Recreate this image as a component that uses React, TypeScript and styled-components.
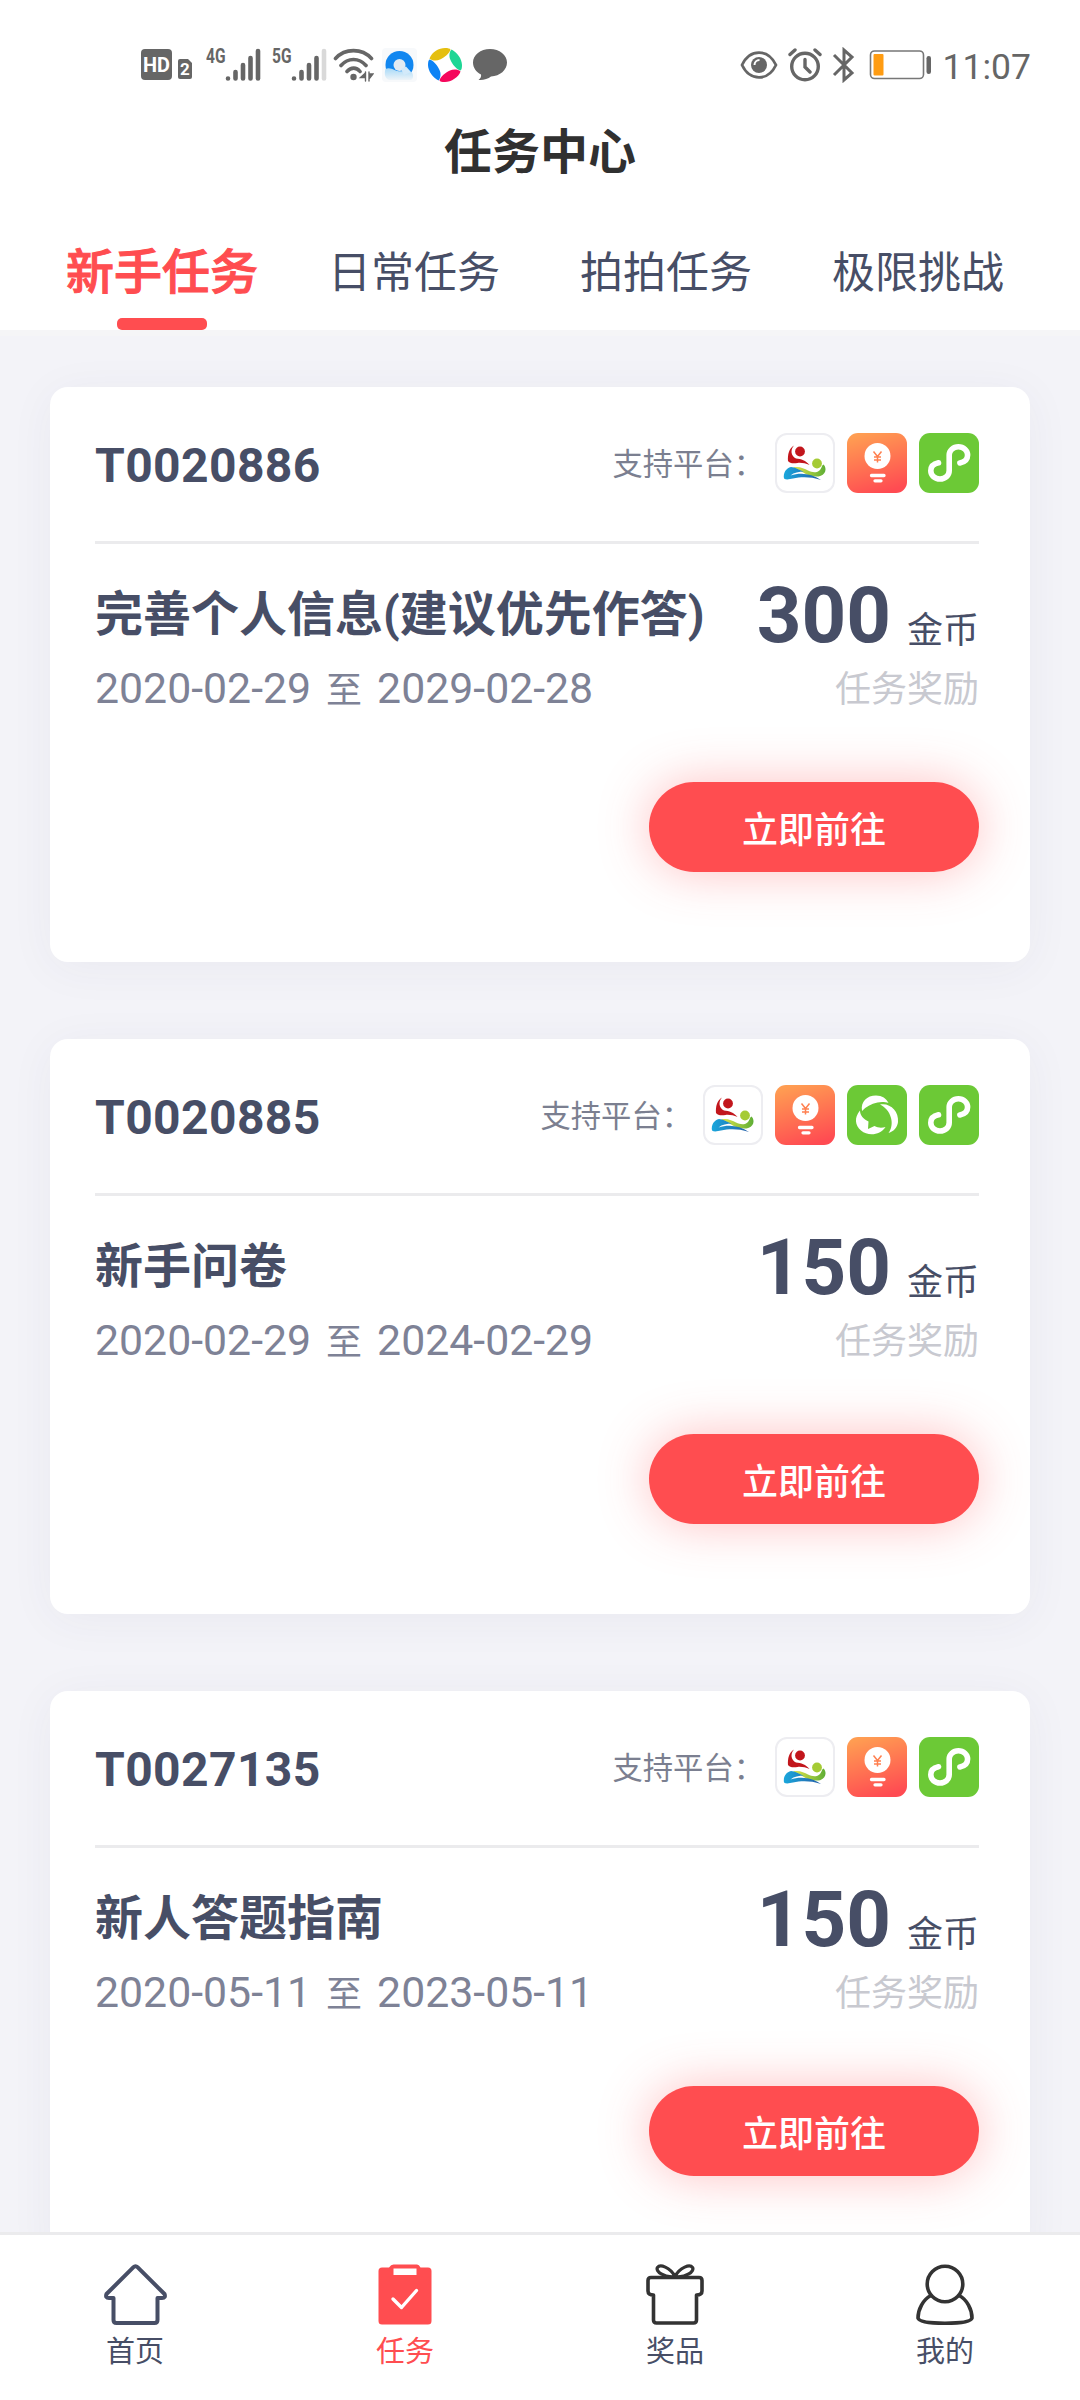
import React from 'react';
import styled, { createGlobalStyle } from 'styled-components';

const INK = '#474e66';
const RED = '#ff4d50';
const STATUS = '#666666';

const GlobalStyle = createGlobalStyle`
  *, *::before, *::after { box-sizing: border-box; }
  html, body { margin: 0; padding: 0; background: #f3f3f8; }
  body { font-family: Roboto, "Noto Sans CJK SC", sans-serif; color: ${INK}; }
  svg { display: block; flex: none; }
`;

const Screen = styled.div`
  display: flex;
  flex-direction: column;
  width: 1080px;
  height: 2400px;
  overflow: hidden;
  background: #f3f3f8;
`;

const Header = styled.header`
  flex: none;
  height: 336px;
  background: #fff;
  border-bottom: 6px solid #f5f5f7;
`;

const StatusBar = styled.div`
  display: flex;
  align-items: center;
  justify-content: space-between;
  height: 130px;
  padding: 0 49px 0 140px;
`;

const StatusGroup = styled.div`
  display: flex;
  align-items: center;
  height: 36px;
`;

const StatusItem = styled.div<{ $gap?: number }>`
  margin-left: ${(p) => p.$gap ?? 0}px;
`;

const NetLabel = styled.span<{ $gap: number }>`
  align-self: flex-start;
  width: 19px;
  margin-left: ${(p) => p.$gap}px;
  font-size: 21px;
  line-height: 18px;
  font-weight: 700;
  white-space: nowrap;
  transform: scaleX(0.74);
  transform-origin: left;
  color: ${STATUS};
`;

const Clock = styled.time`
  margin-left: 11px;
  padding-top: 3px;
  font-size: 35.5px;
  line-height: 40px;
  color: ${STATUS};
`;

const PageTitle = styled.h1`
  margin: 0;
  height: 44px;
  font-size: 48px;
  line-height: 46px;
  font-weight: 700;
  text-align: center;
  color: #303030;
`;

const Tabs = styled.nav`
  display: flex;
  height: 156px;
  padding: 0 36px;
`;

const Tab = styled.a<{ $active?: boolean }>`
  display: flex;
  flex: 1;
  flex-direction: column;
  align-items: center;
  justify-content: flex-end;
  font-size: ${(p) => (p.$active ? 48 : 43)}px;
  font-weight: ${(p) => (p.$active ? 500 : 400)};
  -webkit-text-stroke: ${(p) => (p.$active ? 1 : 0)}px ${RED};
  color: ${(p) => (p.$active ? RED : INK)};
  line-height: 60px;
  white-space: nowrap;

  &::after {
    content: '';
    width: 90px;
    height: 12px;
    margin-top: 15px;
    border-radius: 5px;
    background: ${(p) => (p.$active ? RED : 'transparent')};
  }
`;

const TaskList = styled.main`
  display: flex;
  flex: 1;
  flex-direction: column;
  gap: 77px;
  min-height: 0;
  padding: 51px 50px 0;
  overflow: hidden;
`;

const Card = styled.article`
  flex: none;
  height: 575px;
  padding: 0 51px 0 45px;
  border-radius: 18px;
  background: #fff;
  box-shadow: 0 6px 46px rgba(60, 60, 90, 0.05);
`;

const CardHead = styled.div`
  display: flex;
  align-items: center;
  justify-content: space-between;
  height: 157px;
  padding-bottom: 2px;
  border-bottom: 3px solid #ebebed;
`;

const TaskCode = styled.span`
  padding-top: 6px;
  font-size: 48px;
  font-weight: 700;
  line-height: 56px;
  letter-spacing: 0.4px;
`;

const Platforms = styled.div`
  display: flex;
  align-items: center;
  gap: 12px;
`;

const PlatformLabel = styled.span`
  padding-top: 3px;
  margin-right: -1px;
  font-size: 30.3px;
  line-height: 40px;
  color: #7b7f90;
`;

const CardBody = styled.div`
  display: flex;
  justify-content: space-between;
  height: 166px;
`;

const Info = styled.div`
  padding-top: 41px;
`;

const TaskTitle = styled.h2`
  margin: 0;
  font-size: 48px;
  font-weight: 700;
  line-height: 60px;
  white-space: nowrap;
`;

const Period = styled.div`
  display: flex;
  align-items: center;
  height: 60px;
  margin-top: 13px;
  font-size: 42.8px;
  color: #7e8296;
  white-space: nowrap;
`;

const Until = styled.span`
  margin: 0 15px;
  padding-bottom: 2px;
  font-size: 36px;
`;

const Reward = styled.div`
  padding-top: 32px;
  text-align: right;
`;

const Amount = styled.div`
  display: flex;
  align-items: flex-start;
  justify-content: flex-end;
  gap: 16px;
  height: 89px;
`;

const AmountValue = styled.span`
  font-size: 78px;
  font-weight: 700;
  line-height: 80px;
`;

const Unit = styled.span`
  padding-top: 35px;
  font-size: 36px;
  line-height: 40px;
`;

const RewardLabel = styled.div`
  height: 50px;
  font-size: 36px;
  line-height: 50px;
  color: #c8c9d0;
`;

const Actions = styled.div`
  display: flex;
  justify-content: flex-end;
  padding-top: 72px;
`;

const GoButton = styled.button`
  width: 330px;
  height: 90px;
  padding: 0;
  border: 0;
  border-radius: 45px;
  background: ${RED};
  box-shadow: 0 0 50px rgba(255, 77, 80, 0.35);
  color: #fff;
  font-family: inherit;
  font-size: 36px;
  font-weight: 500;
`;

const BottomNav = styled.nav`
  display: flex;
  flex: none;
  height: 168px;
  padding-top: 29px;
  border-top: 3px solid #ebebed;
  background: #fff;
`;

const NavItem = styled.a<{ $active?: boolean }>`
  display: flex;
  flex: 1;
  flex-direction: column;
  align-items: center;
  gap: 6px;
  font-size: 29px;
  line-height: 40px;
  color: ${(p) => (p.$active ? RED : INK)};
`;

/* ---------- status icons ---------- */

const HdIcon = () => (
  <svg width="52" height="32" viewBox="0 0 52 32">
    <rect x="1" y="0" width="31" height="31" rx="4" fill={STATUS} />
    <text x="16.5" y="23" textAnchor="middle" fontFamily="Roboto" fontWeight="700" fontSize="21" fill="#fff" textLength="27" lengthAdjust="spacingAndGlyphs">HD</text>
    <path d="M40 10h8l4 4v14a2 2 0 0 1-2 2H40a2 2 0 0 1-2-2V12a2 2 0 0 1 2-2z" fill={STATUS} />
    <text x="45" y="26" textAnchor="middle" fontFamily="Roboto" fontWeight="700" fontSize="17" fill="#fff">2</text>
  </svg>
);

const SignalIcon = ({ weak }: { weak?: boolean }) => (
  <svg width="36" height="34" viewBox="0 0 36 34" fill="none" strokeWidth="4.6" strokeLinecap="round">
    <path d="M3 30.5v0M10.5 24v6.5M18 17v13.5M25.5 10v20.5" stroke={STATUS} />
    <path d="M33 3v27.5" stroke={weak ? '#d9d9d9' : STATUS} />
  </svg>
);

const WifiIcon = () => (
  <svg width="41" height="34" viewBox="0 0 41 34" fill="none" stroke={STATUS} strokeWidth="3.6" strokeLinecap="round">
    <path d="M2.5 10.5C12 0 29 0 38.500 10.500M8 17.500c7-8 18-8 25 0M14 23.500c4-4.500 9.500-4.500 13 0" />
    <circle cx="20.500" cy="29" r="3.200" fill={STATUS} stroke="none" />
    <path d="M32.500 24v9M32.500 25l-5 4.500h5M36 24v9M36 31l4-5h-4" fill={STATUS} strokeWidth="1.400" />
  </svg>
);

const BrowserIcon = () => (
  <svg width="35" height="34" viewBox="0 0 35 34">
    <defs>
      <linearGradient id="cloud" x1="0" y1="0" x2="0" y2="1">
        <stop offset="0" stopColor="#a9daf8" />
        <stop offset="1" stopColor="#eef4f8" />
      </linearGradient>
    </defs>
    <rect width="35" height="34" rx="4" fill="#f7f9fb" />
    <circle cx="17.500" cy="17" r="14" fill="#1287f0" />
    <path d="M3.500 21c3-1.500 6-.5 9 1 4 2 9 1 12 .5 2 1 3 1.500 5 1.500 2 2 2.500 6.500-.5 8H7c-4-1.500-5-6-3.500-11z" fill="url(#cloud)" />
    <circle cx="17.500" cy="17" r="6" fill="#e3ebf2" />
    <path d="M19 21l5-2.500 5 5.500-7 3z" fill="#d3eafa" />
  </svg>
);

const PinwheelIcon = () => (
  <svg width="36" height="36" viewBox="0 0 36 36">
    <path d="M2.500 11.500C5 5 12 1 18 1c3 0 5 .5 5.500 1.500C23 6 17 11 13 12.500c-3 1.500-8 1.500-10.500-1z" fill="#e5bf10" />
    <path d="M24.500 2.500C30 5 35 12 35 18c0 3-.5 5-1.500 5.500C30 23 25 17 23.500 13c-1.500-3-1.500-8 1-10.500z" fill="#1ed695" />
    <path d="M33.500 24.500C32 30 24 35 18 35c-3 0-5-.5-5.500-1.500C13 30 19 25 23 23.500c3-1.500 8-1.500 10.500 1z" fill="#f5085c" />
    <path d="M2.500 12.500C6 13 11 19 12.500 23c1.500 3 1.500 8-1 10.500C6 31 1 24 1 18c0-3 .5-5 1.500-5.500z" fill="#0d83f5" />
  </svg>
);

const BubbleIcon = () => (
  <svg width="36" height="34" viewBox="0 0 36 34">
    <path d="M18 1c9.500 0 17 6 17 13.500S28 28 19 28.500C16 31 11 32.500 6.500 32c2-1.500 3-3.500 2.500-5.500C4 24 1 19.500 1 14.500 1 7 8.500 1 18 1z" fill={STATUS} />
  </svg>
);

const EyeIcon = () => (
  <svg width="38" height="30" viewBox="0 0 38 30" fill="none" stroke={STATUS} strokeWidth="2.800">
    <path d="M2 15C10 -1.500 28 -1.500 36 15 28 31.500 10 31.500 2 15z" strokeLinejoin="round" />
    <circle cx="19" cy="15" r="8" fill={STATUS} stroke="none" />
    <path d="M14.500 15a5 5 0 0 1 5-5" stroke="#fff" strokeWidth="2" />
  </svg>
);

const AlarmIcon = () => (
  <svg width="34" height="36" viewBox="0 0 34 36" fill="none" stroke={STATUS} strokeWidth="3.400" strokeLinecap="round">
    <circle cx="17" cy="19.500" r="13.300" />
    <path d="M17 12.500v7.500l5 5M2 7.500L7 3M32 7.500L27 3" />
  </svg>
);

const BluetoothIcon = () => (
  <svg width="24" height="36" viewBox="0 0 24 36" fill="none" stroke={STATUS} strokeWidth="3">
    <path d="M2 8l18 18-8 7V3l8 7L2 28" />
  </svg>
);

const BatteryIcon = () => (
  <svg width="63" height="32" viewBox="0 0 63 32">
    <rect x="1.500" y="2" width="53" height="27.500" rx="4" fill="none" stroke="#777" strokeWidth="1.600" />
    <rect x="4.500" y="5" width="10" height="21.500" rx="1" fill="#ff9c12" />
    <rect x="57.500" y="7" width="4.500" height="18" rx="2.200" fill={STATUS} />
  </svg>
);

/* ---------- platform icons ---------- */

const PeopleIcon = () => (
  <svg width="60" height="60" viewBox="0 0 60 60">
    <defs>
      <linearGradient id="wave" x1="0" y1="0" x2="1" y2="0">
        <stop offset="0" stopColor="#1aa7dc" />
        <stop offset="1" stopColor="#255fa8" />
      </linearGradient>
      <linearGradient id="leaf" x1="0" y1="0" x2="1" y2="0">
        <stop offset="0" stopColor="#e3e64a" />
        <stop offset="1" stopColor="#5eae35" />
      </linearGradient>
    </defs>
    <rect x="1" y="1" width="58" height="58" rx="11" fill="#fff" stroke="#ededf1" strokeWidth="2" />
    <circle cx="25" cy="18.500" r="4.900" fill="#c2161c" />
    <path d="M19 12.500C15 17 16 23 21 25.500c5 .5 10 2 13.500 6.500-4-1.500-8-2.500-12-2-4 .5-8 .5-9.500-2C12.500 22 14 15 19 12.500z" fill="#c2161c" />
    <circle cx="42" cy="30.500" r="4.900" fill="#a5cb35" />
    <path d="M18 34.500c6-1.500 11 1 15 3 6 3 12 2.500 14-4.500.5-1 1-1.500 1.500-1.500 4 4 2 11-5 12-7 .5-12-1.500-17-5-3-2-5.500-3-8.500-4z" fill="url(#leaf)" />
    <path d="M9 45.500C8 40 11 35 16 34c4 0 8 3 13 4.500-5 0-10 1-13.500 4 10-3.500 21-2 30.500 4.500-11-3.500-20-3-28-1.500-3.500.8-7 1.500-9 0z" fill="url(#wave)" />
  </svg>
);

const BulbIcon = () => (
  <svg width="60" height="60" viewBox="0 0 60 60">
    <defs>
      <linearGradient id="bulb" x1="0.300" y1="0" x2="0.600" y2="1">
        <stop offset="0" stopColor="#ff9d52" />
        <stop offset="1" stopColor="#ff4b52" />
      </linearGradient>
    </defs>
    <rect width="60" height="60" rx="11" fill="url(#bulb)" />
    <circle cx="30.500" cy="23" r="13" fill="#fff" />
    <path d="M26.500 18.500l4 5 4-5M30.500 23.500v6M27 24h7M27 27h7" fill="none" stroke="#ff8050" strokeWidth="1.500" />
    <path d="M24.500 42.500h12.500M28 47.800h6" stroke="#fff" strokeWidth="3.300" strokeLinecap="round" />
  </svg>
);

const MomentsIcon = () => (
  <svg width="60" height="60" viewBox="0 0 60 60">
    <rect width="60" height="60" rx="11" fill="#6cc936" />
    <g fill="#fff">
      <path d="M15 26C13.500 16.500 20 10.500 29 10.500c6 0 10.500 3 12.500 7.500-3-1-7-1.500-11-.5C24 19 19 21.500 15 26z" />
      <path d="M33 19.500C43 17.500 52 26 51 37c-.5 5-4 9.500-9.500 11 3-4 4-9.500 2.500-15-1.500-6.500-6-11-11-13.500z" />
      <path d="M13 25.500c-6 7-5 15 1 20 7 6 19 5 24.500-3.500-3.500 1-7.500 1-11-1l-6.500 3 .5-7.500C16.500 34 13 30.500 13 25.500z" />
    </g>
  </svg>
);

const MiniProgramIcon = () => (
  <svg width="60" height="60" viewBox="0 0 60 60">
    <rect width="60" height="60" rx="11" fill="#6cc936" />
    <path d="M19.500 29.800C14.500 30.800 11.800 34 11.800 37.800c0 4.500 4 8.200 9.200 8.200 5.200 0 9.200-3.700 9.200-8.200V22c0-4.500 4-8.200 9.200-8.200 5.200 0 9.200 3.700 9.200 8.200 0 3.800-2.700 7-7.700 8" fill="none" stroke="#fff" strokeWidth="5.600" strokeLinecap="round" />
  </svg>
);

const platformIcons = {
  people: PeopleIcon,
  bulb: BulbIcon,
  moments: MomentsIcon,
  mini: MiniProgramIcon,
};
type Platform = keyof typeof platformIcons;

/* ---------- navigation icons ---------- */

const HomeIcon = () => (
  <svg width="63" height="62" viewBox="0 0 63 62" fill="none" stroke={INK} strokeWidth="4" strokeLinejoin="round">
    <path d="M29.500 3.200Q31.500 1.200 33.500 3.200L60.500 30Q62 34 58 34H53.500V56Q53.500 59 50.500 59H12.500Q9.500 59 9.500 56V34H5Q1 34 2.500 30Z" />
  </svg>
);

const TaskIcon = () => (
  <svg width="54" height="62" viewBox="0 0 54 62">
    <path d="M4 3.500H11Q13 .5 15.500.5H39Q41 .5 42.500 3.500H50Q53.500 3.500 53.500 7V57Q53.500 60.500 50 60.500H4Q.5 60.500.5 57V7Q.5 3.500 4 3.500Z" fill={RED} />
    <rect x="15.500" y="4.500" width="23" height="6.500" fill="#fff" />
    <path d="M15 35l8.500 8.500L38.500 26.500" fill="none" stroke="#fff" strokeWidth="3.400" strokeLinecap="round" strokeLinejoin="round" />
  </svg>
);

const GiftIcon = () => (
  <svg width="58" height="62" viewBox="0 0 58 62" fill="none" stroke="#333" strokeWidth="3.600" strokeLinejoin="round">
    <path d="M5 13.500H53Q56 13.500 56 16.500V27Q56 31 50.500 31V56Q50.500 59 47.500 59H10.500Q7.500 59 7.500 56V31Q2 31 2 27V16.500Q2 13.500 5 13.500Z" />
    <path d="M29 12.500C24 3 14 0 11.500 3.500S18 14 29 12.500C40 14 49 7 46.500 3.500S34 3 29 12.500Z" strokeWidth="3.200" />
  </svg>
);

const UserIcon = () => (
  <svg width="58" height="62" viewBox="0 0 58 62" fill="none" stroke="#333" strokeWidth="3.600">
    <circle cx="29" cy="20" r="17.800" />
    <path d="M15 31.500C7 35.500 2 45.500 2 54 3 58 14 59.200 29 59.200S55 58 56 54C56 45.500 51 35.500 43 31.500" strokeLinejoin="round" />
  </svg>
);

/* ---------- data ---------- */

interface Task {
  code: string;
  title: string;
  from: string;
  to: string;
  coins: number;
  platforms: Platform[];
}

const tasks: Task[] = [
  { code: 'T0020886', title: '完善个人信息(建议优先作答)', from: '2020-02-29', to: '2029-02-28', coins: 300, platforms: ['people', 'bulb', 'mini'] },
  { code: 'T0020885', title: '新手问卷', from: '2020-02-29', to: '2024-02-29', coins: 150, platforms: ['people', 'bulb', 'moments', 'mini'] },
  { code: 'T0027135', title: '新人答题指南', from: '2020-05-11', to: '2023-05-11', coins: 150, platforms: ['people', 'bulb', 'mini'] },
];

const tabs = ['新手任务', '日常任务', '拍拍任务', '极限挑战'];

const navItems = [
  { label: '首页', Icon: HomeIcon },
  { label: '任务', Icon: TaskIcon },
  { label: '奖品', Icon: GiftIcon },
  { label: '我的', Icon: UserIcon },
];

const TaskCard = ({ task }: { task: Task }) => (
  <Card>
    <CardHead>
      <TaskCode>{task.code}</TaskCode>
      <Platforms>
        <PlatformLabel>支持平台：</PlatformLabel>
        {task.platforms.map((name) => {
          const Icon = platformIcons[name];
          return <Icon key={name} />;
        })}
      </Platforms>
    </CardHead>
    <CardBody>
      <Info>
        <TaskTitle>{task.title}</TaskTitle>
        <Period>
          {task.from}
          <Until>至</Until>
          {task.to}
        </Period>
      </Info>
      <Reward>
        <Amount>
          <AmountValue>{task.coins}</AmountValue>
          <Unit>金币</Unit>
        </Amount>
        <RewardLabel>任务奖励</RewardLabel>
      </Reward>
    </CardBody>
    <Actions>
      <GoButton>立即前往</GoButton>
    </Actions>
  </Card>
);

export default function App() {
  return (
    <Screen>
      <GlobalStyle />
      <Header>
        <StatusBar>
          <StatusGroup>
            <StatusItem><HdIcon /></StatusItem>
            <NetLabel $gap={14}>4G</NetLabel>
            <StatusItem><SignalIcon /></StatusItem>
            <NetLabel $gap={11}>5G</NetLabel>
            <StatusItem><SignalIcon weak /></StatusItem>
            <StatusItem $gap={6}><WifiIcon /></StatusItem>
            <StatusItem $gap={8}><BrowserIcon /></StatusItem>
            <StatusItem $gap={10}><PinwheelIcon /></StatusItem>
            <StatusItem $gap={9}><BubbleIcon /></StatusItem>
          </StatusGroup>
          <StatusGroup>
            <StatusItem><EyeIcon /></StatusItem>
            <StatusItem $gap={10}><AlarmIcon /></StatusItem>
            <StatusItem $gap={10}><BluetoothIcon /></StatusItem>
            <StatusItem $gap={13}><BatteryIcon /></StatusItem>
            <Clock>11:07</Clock>
          </StatusGroup>
        </StatusBar>
        <PageTitle>任务中心</PageTitle>
        <Tabs>
          {tabs.map((label, i) => (
            <Tab key={label} $active={i === 0}>{label}</Tab>
          ))}
        </Tabs>
      </Header>
      <TaskList>
        {tasks.map((task) => (
          <TaskCard key={task.code} task={task} />
        ))}
      </TaskList>
      <BottomNav>
        {navItems.map(({ label, Icon }, i) => (
          <NavItem key={label} $active={i === 1}>
            <Icon />
            {label}
          </NavItem>
        ))}
      </BottomNav>
    </Screen>
  );
}
